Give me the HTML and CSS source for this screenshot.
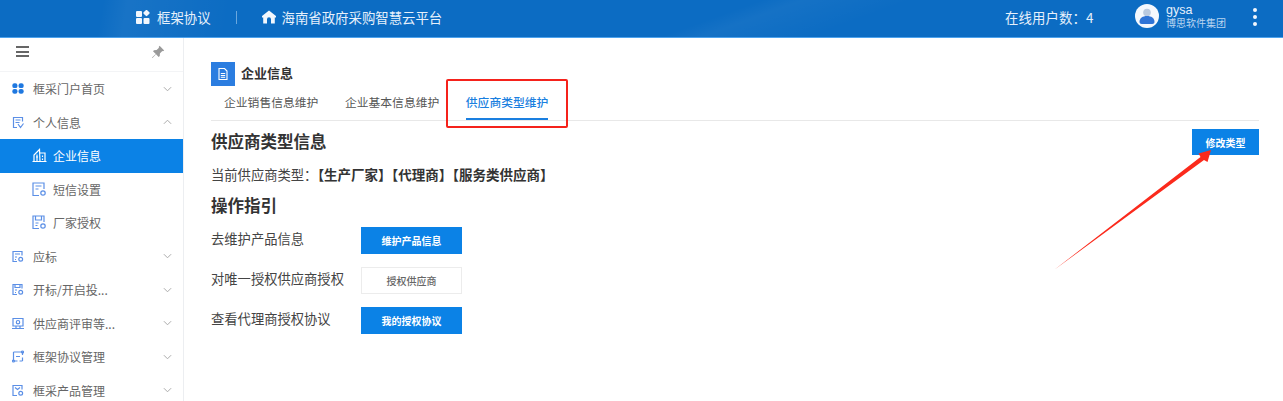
FILE: index.html
```html
<!DOCTYPE html>
<html lang="zh-CN">
<head>
  <meta charset="UTF-8" />
  <title>企业信息</title>
  <link rel="stylesheet" href="styles.css">
</head>
<body>
  <!-- HEADER -->
  <header class="topbar">
    <div class="topbar-left">
      <svg class="top-icon" viewBox="0 0 14 14"><rect x="0" y="1" width="6" height="6" rx="1"/><rect x="8" y="0.500" width="5" height="5" rx="1" transform="rotate(45 10.500 3)"/><rect x="0" y="8" width="6" height="6" rx="1"/><rect x="7.500" y="8" width="6" height="6" rx="1"/></svg>
      <span>框架协议</span>
      <i class="top-sep"></i>
      <svg class="top-icon home" viewBox="0 0 14 14"><path d="M7 .5 14 6v1.500h-1.200V13.500H9V9.300a2 2 0 0 0-4 0v4.200H1.200V7.500H0V6z"/></svg>
      <span>海南省政府采购智慧云平台</span>
    </div>
    <div class="topbar-right">
      <span class="online">在线用户数：4</span>
      <div class="user">
        <svg class="avatar" viewBox="0 0 24 24"><circle cx="12" cy="12" r="12" fill="#f4f8fd"/><circle cx="12" cy="8.500" r="3.800" fill="#b9c9df"/><path d="M4.500 18c0-4 3.200-6 7.500-6s7.500 2 7.500 6c0 1.200-1 2-2.200 2H6.700c-1.200 0-2.200-.8-2.200-2z" fill="#2f74d6"/></svg>
        <div class="user-text">
          <div class="user-name">gysa</div>
          <div class="user-org">博思软件集团</div>
        </div>
      </div>
      <div class="dots"><i></i><i></i><i></i></div>
    </div>
  </header>

  <div class="layout">
    <!-- SIDEBAR -->
    <aside class="sidebar">
      <div class="side-tools">
        <div class="burger"><i></i><i></i><i></i></div>
        <svg class="pin" viewBox="0 0 14 14"><path d="M8.600.8 13.200 5.400 12 6.300 11.300 6 8.900 8.400 8.800 11 7.700 12 5 9.200 1.500 13 1 12.500 4.800 9 2 6.300 3 5.200 5.600 5.100 8 2.700 7.700 2z"/></svg>
      </div>
      <nav class="menu">
        <a class="menu-item" href="#">
          <svg class="menu-icon" viewBox="0 0 12 12"><g fill="#1f78e0"><rect x=".3" y=".8" width="5.200" height="4.800" rx="2.200"/><rect x="6.500" y=".8" width="5.200" height="4.800" rx="2.200"/><rect x=".3" y="6.400" width="5.200" height="4.800" rx="2.200"/><rect x="6.500" y="6.400" width="5.200" height="4.800" rx="2.200"/></g></svg>
          <span class="menu-text">框采门户首页</span>
          <svg class="chev" viewBox="0 0 10 6"><path d="M1 1l4 4 4-4"/></svg>
        </a>
        <a class="menu-item" href="#">
          <svg class="menu-icon line" viewBox="0 0 12 12"><path d="M10.500 5V1H1.500v10H5M3.500 3.500h5M3.500 6h4M6 7.500l2.500 3.500 3-4"/></svg>
          <span class="menu-text">个人信息</span>
          <svg class="chev" viewBox="0 0 10 6"><path d="M1 5l4-4 4 4"/></svg>
        </a>
        <a class="menu-item sub active" href="#">
          <svg class="menu-icon big line" viewBox="0 0 15 14"><path d="M.5 13h14M2 13V6.500L7.500 1 8 13M8 4.500h5V13M5 6v7M4 8.500h2M10.500 7v1.500M10.500 10v1.500"/></svg>
          <span class="menu-text">企业信息</span>
        </a>
        <a class="menu-item sub" href="#">
          <svg class="menu-icon big line" viewBox="0 0 15 15"><path d="M7 13.500H1V1h11v6M3.500 4h6M3.500 7h3"/><circle cx="11" cy="11" r="2.200"/></svg>
          <span class="menu-text">短信设置</span>
        </a>
        <a class="menu-item sub" href="#">
          <svg class="menu-icon big line" viewBox="0 0 15 15"><path d="M7 13.500H1V1h11v6M3.500 1v4h6V1M3.500 8h3M3.500 10.500h2"/><circle cx="11" cy="11" r="2.200"/></svg>
          <span class="menu-text">厂家授权</span>
        </a>
        <a class="menu-item" href="#">
          <svg class="menu-icon line" viewBox="0 0 12 12"><path d="M5 11H1V1h9v4M3 3.500h5M3 6.500h2M3 9h1"/><circle cx="8.700" cy="8.700" r="1.900"/></svg>
          <span class="menu-text">应标</span>
          <svg class="chev" viewBox="0 0 10 6"><path d="M1 1l4 4 4-4"/></svg>
        </a>
        <a class="menu-item" href="#">
          <svg class="menu-icon line" viewBox="0 0 12 12"><path d="M5 11H1V1h9v4M3 1v3h5V1M3 6.500h2M3 9h1"/><circle cx="8.700" cy="8.700" r="1.900"/></svg>
          <span class="menu-text">开标/开启投...</span>
          <svg class="chev" viewBox="0 0 10 6"><path d="M1 1l4 4 4-4"/></svg>
        </a>
        <a class="menu-item" href="#">
          <svg class="menu-icon line" viewBox="0 0 12 12"><path d="M1 1h10v7.500H1zM0 11h12M4 8.500V11M8 8.500V11"/><circle cx="6" cy="4.700" r="1.700"/></svg>
          <span class="menu-text">供应商评审等...</span>
          <svg class="chev" viewBox="0 0 10 6"><path d="M1 1l4 4 4-4"/></svg>
        </a>
        <a class="menu-item" href="#">
          <svg class="menu-icon line" viewBox="0 0 12 12"><path d="M1.500 1.500h9M1.500 1.500v9M10.500 1.500v3M1.500 10.500h4M7.500 10.500h3M10.500 7v3.500M4 6h4"/><circle cx="1.500" cy="10.500" r="1"/><circle cx="10.500" cy="1.500" r="1"/></svg>
          <span class="menu-text">框架协议管理</span>
          <svg class="chev" viewBox="0 0 10 6"><path d="M1 1l4 4 4-4"/></svg>
        </a>
        <a class="menu-item" href="#">
          <svg class="menu-icon line" viewBox="0 0 12 12"><path d="M5 11H1V1h9v4M3 3l2.500 2L8 3"/><circle cx="8.700" cy="8.700" r="1.900"/></svg>
          <span class="menu-text">框采产品管理</span>
          <svg class="chev" viewBox="0 0 10 6"><path d="M1 1l4 4 4-4"/></svg>
        </a>
      </nav>
    </aside>

    <!-- CONTENT -->
    <main class="content">
      <div class="page-title">
        <span class="title-icon">
          <svg viewBox="0 0 12 12"><path d="M2 .5h5.500L10 3v8.500H2z" fill="none" stroke="#fff" stroke-width="1.100"/><path d="M3.800 5.500h4.400M3.800 7.500h4.400M3.800 9.300h4.400" stroke="#fff"/></svg>
        </span>
        <span class="title-text">企业信息</span>
      </div>

      <div class="tabs">
        <a class="tab" href="#">企业销售信息维护</a>
        <a class="tab" href="#">企业基本信息维护</a>
        <a class="tab current" href="#">供应商类型维护</a>
      </div>

      <div class="info-head">
        <h2 class="info-title">供应商类型信息</h2>
        <button class="btn primary edit-btn">修改类型</button>
      </div>
      <p class="current-type">当前供应商类型：<strong>【生产厂家】【代理商】【服务类供应商】</strong></p>

      <h2 class="guide-title">操作指引</h2>
      <div class="guide">
        <span>去维护产品信息</span>
        <button class="btn primary">维护产品信息</button>
        <span>对唯一授权供应商授权</span>
        <button class="btn plain">授权供应商</button>
        <span>查看代理商授权协议</span>
        <button class="btn primary">我的授权协议</button>
      </div>
    </main>
  </div>

  <!-- annotations drawn on top of the screenshot -->
  <div class="mark-box"></div>
  <svg class="mark-arrow" viewBox="0 0 1283 401"><path d="M1054 270 1200.500 157 1198.500 153.500 1211 150 1207.500 162 1204 160z" fill="#fb2a1c"/></svg>
</body>
</html>
```

FILE: styles.css
```css
* {
  box-sizing: border-box;
}

html,
body {
  height: 401px;
}

body {
  margin: 0;
  overflow: hidden;
  background: #fff;
  color: #333;
  font-family: "Noto Sans CJK SC", "Noto Sans", sans-serif;
}

/* HEADER */
.topbar {
  height: 38px;
  padding: 0 26px 3px 136px;
  display: flex;
  justify-content: space-between;
  align-items: center;
  color: #e6f0fb;
  font-size: 13.4px;
  border-bottom: 1px solid #4da3ee;
  background:
    linear-gradient(100deg, transparent 8%, rgba(255, 255, 255, .05) 10%, transparent 18%),
    linear-gradient(160deg, transparent 55%, rgba(255, 255, 255, .04) 58%, transparent 66%),
    #0c6cc3;
}

.topbar-left,
.topbar-right {
  display: flex;
  align-items: center;
}

.top-icon {
  width: 14px;
  height: 14px;
  margin-right: 7px;
  fill: #f2f7fd;
}

.top-icon.home {
  margin-right: 6px;
}

.top-sep {
  width: 1px;
  height: 13px;
  margin: 0 25px;
  background: #6aa7de;
}

.online {
  width: 130px;
  letter-spacing: .1px;
}

.user {
  display: flex;
  align-items: center;
  gap: 7px;
  width: 118px;
}

.avatar {
  width: 24px;
  height: 24px;
  margin-top: -2px;
  flex: none;
}

.user-text {
  font-family: "Liberation Sans", "Noto Sans CJK SC", sans-serif;
}

.user-name {
  font-size: 12.500px;
  line-height: 13px;
}

.user-org {
  font-size: 10px;
  line-height: 13px;
  color: #b9d5f0;
}

.dots {
  display: flex;
  flex-direction: column;
  gap: 3px;
}

.dots i {
  width: 4px;
  height: 4px;
  border-radius: 50%;
  background: #f2f7fd;
}

/* SIDEBAR */
.layout {
  display: flex;
  height: 363px;
}

.sidebar {
  width: 184px;
  flex: none;
  overflow: hidden;
  border-right: 1px solid #eceef1;
}

.side-tools {
  height: 34px;
  padding: 0 18px 0 16px;
  display: flex;
  justify-content: space-between;
  align-items: center;
  border-bottom: 1px solid #f3f4f6;
}

.burger {
  display: flex;
  flex-direction: column;
  gap: 2.500px;
  margin-top: -6px;
}

.burger i {
  width: 13px;
  height: 2px;
  background: #666;
}

.pin {
  width: 14px;
  height: 14px;
  margin-top: -6px;
  fill: #9a9a9a;
}

.menu-item {
  height: 33.500px;
  padding: 0 11px 0 12px;
  display: flex;
  align-items: center;
  color: #666;
  font-size: 12px;
  text-decoration: none;
}

.menu-item.sub {
  padding-left: 32px;
}

.menu-item.active {
  background: #0b82e6;
  color: #fff;
}

.menu-icon {
  width: 12px;
  height: 13px;
  margin-right: 9px;
  flex: none;
}

.menu-icon.big {
  width: 15px;
  height: 15px;
  margin-right: 6px;
}

.line {
  fill: none;
  stroke: #5b8fe6;
  stroke-width: 1.200;
}

.active .line {
  stroke: #fff;
}

.menu-text {
  flex: 1;
  white-space: nowrap;
}

.chev {
  width: 9px;
  height: 6px;
  fill: none;
  stroke: #aaa;
  stroke-width: 1.100;
}

/* CONTENT */
.content {
  flex: 1;
  padding: 24px 24px 0 27px;
}

.page-title {
  display: flex;
  align-items: center;
  gap: 6px;
  height: 24px;
  font-size: 13px;
  font-weight: 700;
  color: #333;
}

.title-text {
  margin-bottom: 3px;
}

.title-icon {
  width: 24px;
  height: 24px;
  display: flex;
  justify-content: center;
  align-items: center;
  background: #2b7de0;
}

.title-icon svg {
  width: 12px;
  height: 12px;
}

.tabs {
  display: flex;
  gap: 26.500px;
  height: 35px;
  padding-left: 13px;
  border-bottom: 1px solid #e8e8e8;
}

.tab {
  height: 34px;
  line-height: 32px;
  font-size: 11.800px;
  color: #555;
  text-decoration: none;
}

.tab.current {
  color: #1a7fe0;
  font-weight: 500;
  border-bottom: 2px solid #1a7fe0;
}

.info-head {
  display: flex;
  justify-content: space-between;
  align-items: flex-start;
  height: 35px;
  padding-top: 8px;
}

h2 {
  margin: 0;
  font-size: 16.500px;
  line-height: 26px;
  font-weight: 700;
  color: #333;
}

.info-title {
  margin-top: -1px;
}

.current-type {
  margin: 7px 0 0;
  font-size: 13.300px;
  line-height: 22px;
  color: #444;
}

.current-type strong {
  font-size: 13.500px;
  font-weight: 700;
  color: #333;
}

.guide-title {
  margin-top: 6px;
}

.guide {
  display: grid;
  grid-template-columns: 150px 101px;
  row-gap: 13px;
  align-items: center;
  margin-top: 9px;
  font-size: 13.300px;
  color: #444;
}

.guide span {
  margin-bottom: 5px;
}

.btn {
  height: 27px;
  padding: 0;
  border: 0;
  font-family: inherit;
  font-size: 10px;
  font-weight: 700;
}

.btn.primary {
  background: #0b82e6;
  color: #fff;
}

.btn.plain {
  border: 1px solid #ececec;
  background: #fff;
  color: #666;
  font-weight: 500;
}

.edit-btn {
  width: 67px;
  height: 26px;
}

/* ANNOTATIONS */
.mark-box {
  position: absolute;
  left: 446px;
  top: 79px;
  width: 122px;
  height: 49px;
  border: 2px solid #f5221b;
  border-radius: 2px;
}

.mark-arrow {
  position: absolute;
  left: 0;
  top: 0;
  width: 1283px;
  height: 401px;
  pointer-events: none;
}
```
